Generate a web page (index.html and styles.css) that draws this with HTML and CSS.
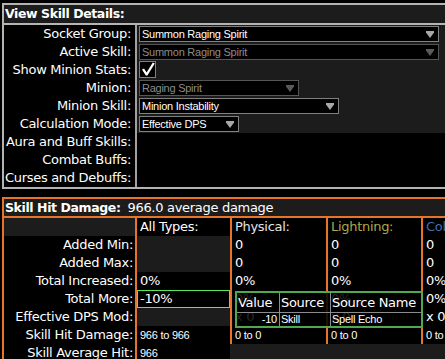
FILE: index.html
```html
<!DOCTYPE html>
<html lang="en">
    <head>
        <meta charset="UTF-8" />
        <title>View Skill Details</title>
        <link rel="stylesheet" href="styles.css">
    </head>
    <body>
        <div class="page">
            <div class="section details">
                <div class="section-title">View Skill Details:</div>
                <div class="detail-row active">
                    <div class="label">Socket Group:</div>
                    <div class="control">
                        <div class="dropdown w300">
                            <span>Summon Raging Spirit</span>
                            <svg class="arrow" width="8" height="7" viewBox="0 0 8 7"><path d="M0 0H8V1.5L4 7L0 1.5Z" /></svg>
                        </div>
                    </div>
                </div>
                <div class="detail-row active">
                    <div class="label">Active Skill:</div>
                    <div class="control">
                        <div class="dropdown w300 disabled">
                            <span>Summon Raging Spirit</span>
                            <svg class="arrow" width="8" height="7" viewBox="0 0 8 7"><path d="M0 0H8V1.5L4 7L0 1.5Z" /></svg>
                        </div>
                    </div>
                </div>
                <div class="detail-row active">
                    <div class="label">Show Minion Stats:</div>
                    <div class="control">
                        <div class="checkbox">
                            <svg width="17" height="16" viewBox="0 0 17 16"><path d="M3 8.5L5 7.6L7.6 11.4L13.8 1.6L15.8 2.6L8.4 14.6H6.8Z" /></svg>
                        </div>
                    </div>
                </div>
                <div class="detail-row active">
                    <div class="label">Minion:</div>
                    <div class="control">
                        <div class="dropdown w160 disabled">
                            <span>Raging Spirit</span>
                            <svg class="arrow" width="8" height="7" viewBox="0 0 8 7"><path d="M0 0H8V1.5L4 7L0 1.5Z" /></svg>
                        </div>
                    </div>
                </div>
                <div class="detail-row active">
                    <div class="label">Minion Skill:</div>
                    <div class="control">
                        <div class="dropdown w200">
                            <span>Minion Instability</span>
                            <svg class="arrow" width="8" height="7" viewBox="0 0 8 7"><path d="M0 0H8V1.5L4 7L0 1.5Z" /></svg>
                        </div>
                    </div>
                </div>
                <div class="detail-row active">
                    <div class="label">Calculation Mode:</div>
                    <div class="control">
                        <div class="dropdown w100">
                            <span>Effective DPS</span>
                            <svg class="arrow" width="8" height="7" viewBox="0 0 8 7"><path d="M0 0H8V1.5L4 7L0 1.5Z" /></svg>
                        </div>
                    </div>
                </div>
                <div class="detail-row">
                    <div class="label">Aura and Buff Skills:</div>
                    <div class="control"></div>
                </div>
                <div class="detail-row">
                    <div class="label">Combat Buffs:</div>
                    <div class="control"></div>
                </div>
                <div class="detail-row">
                    <div class="label">Curses and Debuffs:</div>
                    <div class="control"></div>
                </div>
            </div>

            <div class="section damage">
                <div class="section-title">Skill Hit Damage: <span class="title-value">966.0 average damage</span></div>
                <div class="damage-grid">
                    <div class="label empty"></div>
                    <div class="cell">All Types:</div>
                    <div class="cell phys">Physical:</div>
                    <div class="cell lightning">Lightning:</div>
                    <div class="cell cold">Cold:</div>

                    <div class="label">Added Min:</div>
                    <div class="cell empty"></div>
                    <div class="cell">0</div>
                    <div class="cell">0</div>
                    <div class="cell">0</div>

                    <div class="label">Added Max:</div>
                    <div class="cell empty"></div>
                    <div class="cell">0</div>
                    <div class="cell">0</div>
                    <div class="cell">0</div>

                    <div class="label">Total Increased:</div>
                    <div class="cell">0%</div>
                    <div class="cell">0%</div>
                    <div class="cell">0%</div>
                    <div class="cell">0%</div>

                    <div class="label">Total More:</div>
                    <div class="cell hovered">-10%</div>
                    <div class="cell">0%</div>
                    <div class="cell">0%</div>
                    <div class="cell">0%</div>

                    <div class="label">Effective DPS Mod:</div>
                    <div class="cell empty"></div>
                    <div class="cell">x 0</div>
                    <div class="cell">x 0</div>
                    <div class="cell">x 0</div>

                    <div class="label">Skill Hit Damage:</div>
                    <div class="cell small">966 to 966</div>
                    <div class="cell small">0 to 0</div>
                    <div class="cell small">0 to 0</div>
                    <div class="cell small">0 to 0</div>

                    <div class="label">Skill Average Hit:</div>
                    <div class="cell small">966</div>
                    <div class="rest"></div>
                </div>

                <!-- breakdown tooltip for Total More -->
                <div class="tooltip">
                    <table>
                        <tr>
                            <th class="col-value">Value</th>
                            <th class="col-source">Source</th>
                            <th>Source Name</th>
                        </tr>
                        <tr>
                            <td class="num">-10</td>
                            <td>Skill</td>
                            <td>Spell Echo</td>
                        </tr>
                    </table>
                </div>
            </div>
        </div>
    </body>
</html>
```

FILE: styles.css
```css
body {
    margin: 0;
    width: 445px;
    height: 359px;
    overflow: hidden;
    background-color: #000;
    color: #fff;
    font-family: "DejaVu Sans", sans-serif;
    font-size: 13px;
    letter-spacing: -0.3px;
}
.page {
    width: 620px;
    padding: 3px 0 0 2px;
}
.section {
    border: 2px solid #b4b4b4;
}
.section-title {
    height: 18px;
    line-height: 18px;
    padding-left: 1px;
    background-color: #1c1c1c;
    border-bottom: 2px solid #b4b4b4;
    font-weight: bold;
    font-size: 12.5px;
    letter-spacing: -0.4px;
}
.title-value {
    font-weight: normal;
    font-size: 13px;
    letter-spacing: -0.3px;
    margin-left: 3px;
}
.detail-row {
    display: flex;
    height: 18px;
}
.label {
    width: 131px;
    flex-shrink: 0;
    text-align: right;
    padding-right: 2px;
    box-sizing: border-box;
    line-height: 18px;
    background-color: #000;
    white-space: nowrap;
}
.detail-row .label {
    border-right: 2px solid #a0a0a0;
    width: 133px;
    padding-right: 4px;
}
.control {
    flex: 1;
    padding-left: 2px;
}
.detail-row.active .control {
    background-color: #1c1c1c;
}
.dropdown {
    display: flex;
    align-items: center;
    justify-content: space-between;
    box-sizing: border-box;
    height: 16px;
    margin-top: 1px;
    padding: 0 4px 0 2px;
    border: 1px solid #808080;
    background-color: #000;
    font-family: "Liberation Sans", sans-serif;
    font-size: 11px;
    letter-spacing: -0.25px;
    color: #fff;
}
.dropdown .arrow {
    fill: #a8a8a8;
}
.dropdown.disabled {
    border-color: #555;
    color: #8c8c8c;
}
.dropdown.disabled .arrow {
    fill: #5a5a5a;
}
.w300 {
    width: 300px;
}
.w200 {
    width: 200px;
}
.w160 {
    width: 160px;
}
.w100 {
    width: 100px;
}
.checkbox {
    width: 17px;
    height: 17px;
    box-sizing: border-box;
    border: 1px solid #808080;
    background-color: #000;
    fill: #fff;
}
.checkbox svg {
    display: block;
    margin: -1px 0 0 -1px;
}

.damage {
    position: relative;
    margin-top: 8px;
    border-color: #e6742b;
}
.damage .section-title {
    height: 17px;
    line-height: 17px;
    border-bottom-color: #e6742b;
}
.damage-grid {
    display: grid;
    grid-template-columns: 131px 95px 96px 95px 95px;
    grid-auto-rows: 18px;
}
.damage-grid .label.empty {
    background-color: #1c1c1c;
}
.cell {
    border-left: 2px solid #e6742b;
    padding-left: 3px;
    line-height: 18px;
    background-color: #000;
    white-space: nowrap;
}
.cell.empty {
    background-color: #1c1c1c;
}
.cell.small {
    font-family: "Liberation Sans", sans-serif;
    font-size: 11px;
    letter-spacing: -0.25px;
}
.cell.hovered {
    box-shadow: inset 0 0 0 1px #5ce65c;
}
.phys {
    color: #e4e4e4;
}
.lightning {
    color: #adaa47;
}
.cold {
    color: #3f6db3;
}
.rest {
    grid-column: span 3;
    background-color: #1c1c1c;
}
.tooltip {
    position: absolute;
    left: 231px;
    top: 92px;
    width: 188px;
    box-sizing: border-box;
    border: 2px solid #50a850;
    background-color: rgba(0, 0, 0, 0.86);
}
.tooltip table {
    width: 100%;
    border-collapse: collapse;
}
.tooltip th,
.tooltip td {
    border: 1px solid #8c8c8c;
    padding: 0 0 0 1px;
    text-align: left;
    white-space: nowrap;
}
.tooltip tr:first-child th {
    border-top: none;
}
.tooltip tr:last-child td {
    border-bottom: none;
}
.tooltip th:first-child,
.tooltip td:first-child {
    border-left: none;
}
.tooltip th:last-child,
.tooltip td:last-child {
    border-right: none;
}
.tooltip th {
    height: 19px;
    line-height: 19px;
    font-weight: normal;
}
.tooltip td {
    height: 13px;
    line-height: 13px;
    font-family: "Liberation Sans", sans-serif;
    font-size: 11px;
    letter-spacing: -0.25px;
}
.tooltip .col-value {
    width: 41px;
}
.tooltip .col-source {
    width: 49px;
}
.tooltip td.num {
    text-align: right;
    padding-right: 2px;
}
```
